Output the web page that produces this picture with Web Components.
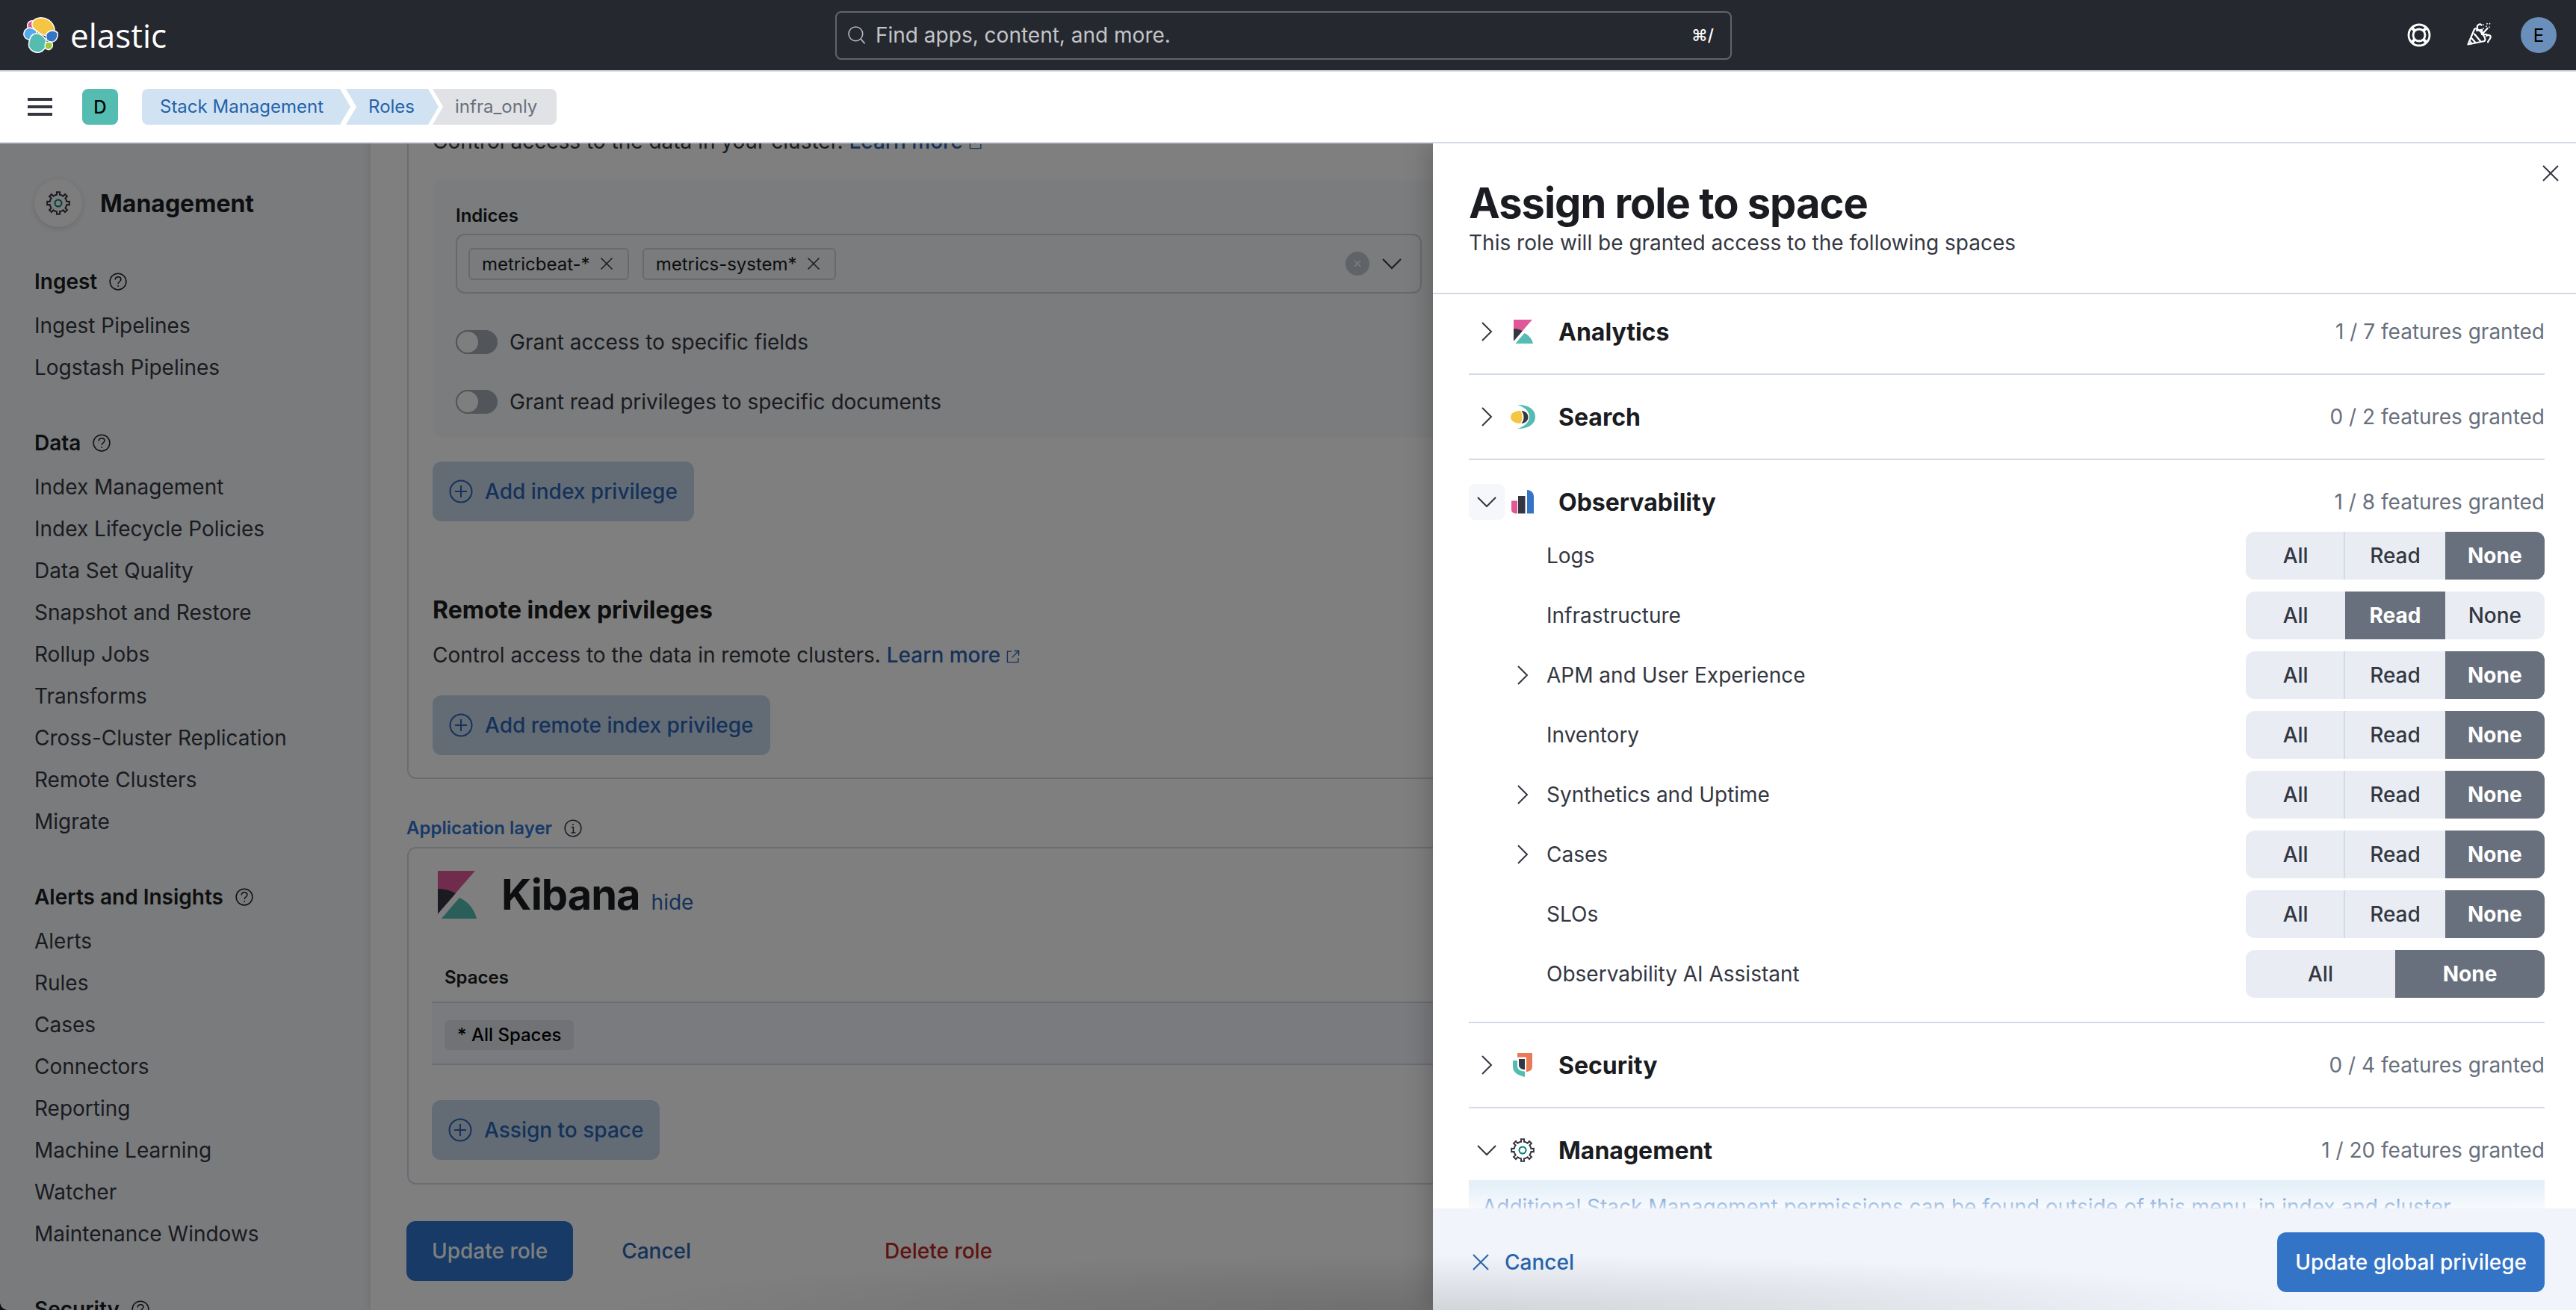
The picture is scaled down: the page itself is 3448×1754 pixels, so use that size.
<!DOCTYPE html>
<html lang="en">
<head>
<meta charset="utf-8">
<title>Roles - Elastic</title>
<style>
  html, body { margin: 0; height: 100%; overflow: hidden; background: #fff; }
  body { font-family: Inter, "Liberation Sans", sans-serif; font-size: 28px; color: #343741; }
</style>
</head>
<body>
<kbn-shell>
  <kbn-header></kbn-header>
  <kbn-subbar></kbn-subbar>
  <kbn-sidenav slot="side"></kbn-sidenav>
  <kbn-role-page slot="main"></kbn-role-page>
  <kbn-flyout slot="flyout"></kbn-flyout>
</kbn-shell>

<script>
// gear outline, 8 teeth
function gearPath() {
  let d = '';
  for (let i = 0; i < 8; i++) {
    const a = i * Math.PI / 4 - Math.PI / 2;
    const pts = [[11.5, -0.3], [11.5, -0.17], [15, -0.14], [15, 0.14], [11.5, 0.17], [11.5, 0.3]];
    pts.forEach(p => {
      const x = 16 + p[0] * Math.cos(a + p[1]);
      const y = 16 + p[0] * Math.sin(a + p[1]);
      d += (d ? 'L' : 'M') + x.toFixed(2) + ' ' + y.toFixed(2);
    });
  }
  return d + 'Z';
}

const line = 'fill="none" stroke="currentColor" stroke-width="2"';
const ICONS = {
  'chevron-right': `<path ${line} d="M10 4l12 12-12 12"/>`,
  'chevron-down': `<path ${line} d="M4 10l12 12 12-12"/>`,
  'close': `<path ${line} d="M6 6l20 20M26 6L6 26"/>`,
  'clear': `<path fill="none" stroke="currentColor" stroke-width="4" d="M7 7l18 18M25 7L7 25"/>`,
  'plus-circle': `<circle ${line} cx="16" cy="16" r="14.5"/><path ${line} d="M16 8v16M8 16h16"/>`,
  'help': `<circle ${line} cx="16" cy="16" r="14.5"/><path ${line} stroke-width="2.4" d="M11 12.5c0-3 2.400-5 5.200-5s5 1.900 5 4.500c0 4-5 4-5 8"/><path ${line} stroke-width="2.600" d="M16.200 22.500v2.600"/>`,
  'info': `<circle ${line} cx="16" cy="16" r="14.500"/><path ${line} stroke-width="2.400" d="M13 14h3.500v10M12.500 24h8M16 8v2.600"/>`,
  'external': `<path ${line} stroke-width="2.500" d="M13 6H5v21h21v-8M18 5h9v9M27 5L14 18"/>`,
  'search': `<circle ${line} cx="14" cy="14" r="11.500"/><path ${line} d="M22 22l7 8"/>`,
  'lifesaver': `<g fill="none" stroke="currentColor" stroke-width="2.800"><circle cx="16" cy="16" r="14"/><circle cx="16" cy="16" r="8"/><path d="M6 6l4.500 4.500M26 6l-4.500 4.500M6 26l4.500-4.500M26 26l-4.500-4.500" stroke-width="4"/></g>`,
  'party': `<g fill="none" stroke="currentColor" stroke-width="2.200" stroke-linejoin="round" stroke-linecap="round"><path d="M1.500 28.500L10 8c2-2 7 1.500 10.500 6s5.500 8 3 10z"/><path d="M6.500 20.500l4.500 5M10 14.500l8 9.500M4.500 25l2 2.200"/><path d="M13 10l6-1M14 6.500C13 2.500 17 0 19.500 2.500"/><path d="M20 15l7.500-8M20 8.500V15h6.500"/><path d="M26 17c3-2.500 6.500-.5 5.500 2.500s-3 3.500-3.500 6"/><path d="M22 2v.5M22 7v.5M27 .5V1M26 4v.5M30.500 .5V1M30 5v.5" stroke-width="1.600"/></g>`,
  'gear': `<path fill="none" stroke="#343741" stroke-width="2" stroke-linejoin="miter" d="${gearPath()}"/><circle cx="16" cy="16" r="4.500" fill="none" stroke="#017d73" stroke-width="2"/>`,
  'kibana': `<path fill="#e0589a" d="M4 0v28.800L28.900 0z"/><path fill="#343741" d="M4 12v16.800l11.900-13.700A24.700 24.700 0 0 0 4 12"/><path fill="#54bcb1" d="M18.500 18L6.400 32H30c-1.300-5.600-5.200-11.200-11.500-14"/>`,
  'search-app': `<path fill="#54bcb1" d="M9 0C24 0 33 6 33 16S24 32 9 32C18 29 25 24 25 16S18 3 9 0z"/><path fill="#343741" d="M14.500 8c1.800 2.500 3 5 3 8.500s-1.200 6-3 8.500c5 0 9-4 9-8.500S19.500 8 14.500 8z"/><path fill="#f5c543" d="M13 8C6 8 0 11 0 16.500S6 25 13 25c1.500-2 2.500-5 2.500-8.500S14.500 10 13 8z"/>`,
  'observability': `<path fill="#dd5a97" d="M1 14.500h8v17H6a5 5 0 0 1-5-5z"/><path fill="#343741" d="M10 8h9.500v23.500H10z"/><path fill="#3474c6" d="M22 0c4 0 9 3 9 9v22.500h-9z"/>`,
  'security': `<path fill="#e87a55" d="M9 0h20v18c0 5-4 7-8 7V5.500H9z"/><path fill="#343741" d="M11 8h8v14c-4 0-8-2-8-6z"/><path fill="#54bcb1" d="M3 10h6v7c0 5 4 7 10 7.500V32c-9-2-16-6-16-14z"/>`
};

class KbnIcon extends HTMLElement {
  connectedCallback() {
    const size = this.getAttribute('size') || 32;
    const name = this.getAttribute('name');
    this.attachShadow({ mode: 'open' });
    this.shadowRoot.innerHTML = `
      <style>
        :host { display: inline-flex; flex: none; width: ${size}px; height: ${size}px; }
        svg { display: block; width: 100%; height: 100%; overflow: visible; }
      </style>
      <svg viewBox="0 0 32 32" aria-hidden="true">${ICONS[name] || ''}</svg>`;
  }
}

class KbnShell extends HTMLElement {
  connectedCallback() {
    this.attachShadow({ mode: 'open' });
    this.shadowRoot.innerHTML = `
      <style>
        :host { display: flex; flex-direction: column; height: 1754px; position: relative; overflow: hidden; }
        .content { flex: 1; min-height: 0; display: flex; overflow: hidden; position: relative; }
        .mask { position: absolute; inset: 0; background: rgba(0, 0, 0, .5); z-index: 10; }
        .flyout { position: absolute; top: 0; right: 0; bottom: 0; width: 1530px; z-index: 20; display: flex; }
        .edge { position: absolute; inset: 0; z-index: 30; pointer-events: none;
          background: radial-gradient(ellipse 1150px 75px at 1950px 100%, rgba(0, 0, 0, .13), transparent); }
        .corner { position: absolute; left: 0; bottom: 0; width: 10px; height: 10px; z-index: 31;
          background: radial-gradient(circle at 100% 0, transparent 9.500px, #111 10px); }
      </style>
      <slot></slot>
      <div class="content">
        <slot name="side"></slot>
        <slot name="main"></slot>
        <div class="mask"></div>
        <div class="flyout"><slot name="flyout"></slot></div>
        <div class="edge"></div>
        <div class="corner"></div>
      </div>`;
  }
}

class KbnHeader extends HTMLElement {
  connectedCallback() {
    this.attachShadow({ mode: 'open' });
    this.shadowRoot.innerHTML = `
      <style>
        :host { display: flex; flex: none; box-sizing: border-box; height: 96px; background: #25282f;
          border-bottom: 2px solid #d3dae6; align-items: center; position: relative; }
        .brand { display: flex; align-items: center; margin-left: 30px; width: 1088px; flex: none; }
        .brand svg { display: block; width: 48px; height: 48px; flex: none; }
        .word { font-family: "Open Sans", sans-serif; font-size: 44px; line-height: 48px; color: #fff; margin-left: 16px; margin-top: -1px; }
        .search { box-sizing: border-box; flex: none; width: 1200px; height: 65px; border: 2px solid #626469; border-radius: 8px;
          display: flex; align-items: center; padding: 0 22px 0 14px; color: #c3c5c8; font-size: 28px; }
        .search kbn-icon { color: #b5b7ba; margin-right: 12px; }
        .search .txt { flex: 1; }
        .keys { color: #fff; font-size: 22px; font-weight: 500; }
        .right { margin-left: auto; display: flex; align-items: center; color: #fff; padding-right: 26px; }
        .right kbn-icon + kbn-icon { margin-left: 48px; }
        .avatar { width: 48px; height: 48px; border-radius: 50%; background: #6a8fbb; color: #000; display: flex;
          align-items: center; justify-content: center; font-size: 24px; margin-left: 40px; }
      </style>
      <div class="brand">
        <svg viewBox="0 0 48 48" aria-hidden="true">
          <g stroke="#fff" stroke-width="1.500">
            <path fill="#dd5a97" d="M8 7c3-3 8-3 10 0l1 9-10 0c-3-2-3-6-1-9z"/>
            <path fill="#f5c543" d="M13 8c1-5 8-8 14-7 9 1 15 8 16 15 0 4-3 7-6 9-4 1-11-1-16-5-5-3-9-7-8-12z"/>
            <path fill="#54a9ea" d="M2 21c1-5 6-8 11-6 3 1 6 3 6 5 0 4-7 10-11 10-4-1-7-5-6-9z"/>
            <path fill="#3474c6" d="M33 21c4-4 11-4 14 0 1 4-1 9-4 11-3 2-7 1-10-1-2-3-2-8 0-10z"/>
            <path fill="#54bcb1" d="M10 29c1-5 6-8 11-7 5 1 10 6 11 11 1 6-3 12-9 14-6 1-12-2-14-7-1-3 0-8 1-11z"/>
            <path fill="#9cc83c" d="M31 34c3-1 7-1 9 1 1 3 0 6-3 8-2 1-5 0-6-1-1-2-1-6 0-8z"/>
          </g>
        </svg>
        <span class="word">elastic</span>
      </div>
      <div class="search">
        <kbn-icon name="search" size="26"></kbn-icon>
        <span class="txt">Find apps, content, and more.</span>
        <span class="keys">⌘/</span>
      </div>
      <div class="right">
        <kbn-icon name="lifesaver"></kbn-icon>
        <kbn-icon name="party"></kbn-icon>
        <div class="avatar">E</div>
      </div>`;
  }
}

class KbnSubbar extends HTMLElement {
  connectedCallback() {
    this.attachShadow({ mode: 'open' });
    this.shadowRoot.innerHTML = `
      <style>
        :host { display: flex; flex: none; box-sizing: border-box; height: 96px; background: #fff;
          border-bottom: 2px solid #d3dae6; align-items: center; position: relative; z-index: 40; }
        .menu { width: 33px; height: 24px; margin-left: 37px; flex: none;
          background: linear-gradient(#343741 0 4px, transparent 4px 10px, #343741 10px 14px, transparent 14px 20px, #343741 20px 24px); }
        .space { width: 48px; height: 48px; border-radius: 8px; background: #54bcb1; color: #000; margin-left: 40px; flex: none;
          display: flex; align-items: center; justify-content: center; font-size: 24px; font-weight: 500; }
        .crumbs { display: flex; margin-left: 32px; height: 48px; font-size: 24px; line-height: 48px; }
        .crumb { background: #d1e3f3; color: #2562a8; padding: 0 32px 0 30px; margin-left: -6px; flex: none;
          clip-path: polygon(0 0, calc(100% - 14px) 0, 100% 50%, calc(100% - 14px) 100%, 0 100%, 14px 50%); }
        .crumb.first { margin-left: 0; padding: 0 36px 0 24px; border-radius: 8px 0 0 8px;
          clip-path: polygon(0 0, calc(100% - 14px) 0, 100% 50%, calc(100% - 14px) 100%, 0 100%); }
        .crumb.last { background: #e1e2e5; color: #69707d; padding-right: 26px; border-radius: 0 8px 8px 0; margin-left: -8px;
          clip-path: polygon(0 0, 100% 0, 100% 100%, 0 100%, 14px 50%); }
      </style>
      <div class="menu"></div>
      <div class="space">D</div>
      <nav class="crumbs">
        <span class="crumb first">Stack Management</span>
        <span class="crumb">Roles</span>
        <span class="crumb last">infra_only</span>
      </nav>`;
  }
}

class SideGroup extends HTMLElement {
  connectedCallback() {
    const items = (this.getAttribute('items') || '').split('|');
    this.attachShadow({ mode: 'open' });
    this.shadowRoot.innerHTML = `
      <style>
        :host { display: block; margin-bottom: 42px; }
        h3 { margin: 0; height: 62px; display: flex; align-items: center; gap: 16px; font-size: 28px; font-weight: 600; color: #1a1c21; }
        div { height: 56px; line-height: 56px; font-size: 28px; color: #343741; white-space: nowrap; }
      </style>
      <h3>${this.getAttribute('title')} <kbn-icon name="help" size="24"></kbn-icon></h3>
      ${items.map(i => `<div>${i}</div>`).join('')}`;
  }
}

class KbnSidenav extends HTMLElement {
  connectedCallback() {
    this.attachShadow({ mode: 'open' });
    this.shadowRoot.innerHTML = `
      <style>
        :host { display: block; flex: none; box-sizing: border-box; width: 496px; background: #f5f7fa; padding: 48px 0 0 46px;
          position: relative; overflow: hidden; box-shadow: inset -14px 0 14px -14px rgba(0, 0, 0, .12); }
        .glare { position: absolute; left: 0; top: 0; width: 360px; height: 70px; }
        .title { display: flex; align-items: center; height: 64px; margin-bottom: 42px; position: relative;
          font-size: 32px; font-weight: 700; color: #1a1c21; }
        .badge { width: 64px; height: 64px; border-radius: 50%; background: #fafbfd; display: flex; align-items: center; justify-content: center;
          margin-right: 24px; box-shadow: 0 2px 8px rgba(0, 0, 0, .14); }
      </style>
      <svg class="glare" viewBox="0 0 360 70" aria-hidden="true"><path fill="#fff" fill-opacity=".09" d="M0 32l126-11L352 0H250L126 21 0 66z"/></svg>
      <div class="title"><span class="badge"><kbn-icon name="gear"></kbn-icon></span>Management</div>
      <side-group title="Ingest" items="Ingest Pipelines|Logstash Pipelines"></side-group>
      <side-group title="Data" items="Index Management|Index Lifecycle Policies|Data Set Quality|Snapshot and Restore|Rollup Jobs|Transforms|Cross-Cluster Replication|Remote Clusters|Migrate"></side-group>
      <side-group title="Alerts and Insights" items="Alerts|Rules|Cases|Connectors|Reporting|Machine Learning|Watcher|Maintenance Windows"></side-group>
      <side-group title="Security" items="Users"></side-group>`;
  }
}

class KbnButton extends HTMLElement {
  connectedCallback() {
    this.attachShadow({ mode: 'open' });
    const icon = this.getAttribute('icon');
    this.shadowRoot.innerHTML = `
      <style>
        :host { display: inline-flex; box-sizing: border-box; height: 80px; align-items: center; gap: 16px; border-radius: 12px;
          padding: 0 22px; font-size: 28px; font-weight: 500; white-space: nowrap; background: #c6d8ea; color: #2a64b4; flex: none; }
        :host([variant="fill"]) { background: #2e74ce; color: #fff; padding: 0 34px; }
        :host([variant="primary"]) { background: #3474c6; color: #fff; padding: 0 24px; }
        :host([variant="empty"]) { background: none; padding: 0; }
        :host([variant="danger"]) { background: none; padding: 0; color: #bd271e; }
      </style>
      ${icon ? `<kbn-icon name="${icon}"></kbn-icon>` : ''}<slot></slot>`;
  }
}

class KbnPill extends HTMLElement {
  connectedCallback() {
    this.attachShadow({ mode: 'open' });
    this.shadowRoot.innerHTML = `
      <style>
        :host { display: inline-flex; box-sizing: border-box; height: 43px; align-items: center; gap: 10px; padding: 0 16px 0 16px;
          border: 2px solid #cdd3de; border-radius: 6px; background: #f5f7fa; color: #1a1c21; font-size: 24px; }
        kbn-icon { color: #343741; }
      </style>
      <slot></slot><kbn-icon name="close" size="24"></kbn-icon>`;
  }
}

class KbnSwitch extends HTMLElement {
  connectedCallback() {
    this.attachShadow({ mode: 'open' });
    this.shadowRoot.innerHTML = `
      <style>
        :host { display: flex; height: 32px; align-items: center; gap: 16px; font-size: 28px; color: #343741; }
        .track { width: 56px; height: 32px; border-radius: 16px; background: #a5aab2; position: relative; flex: none; }
        .knob { position: absolute; left: 0; top: 0; box-sizing: border-box; width: 32px; height: 32px; border-radius: 50%;
          background: #fbfcfd; border: 2px solid #a5aab2; }
      </style>
      <span class="track"><span class="knob"></span></span><slot></slot>`;
  }
}

class KbnRolePage extends HTMLElement {
  connectedCallback() {
    this.attachShadow({ mode: 'open' });
    this.shadowRoot.innerHTML = `
      <style>
        :host { display: block; flex: 1; min-width: 0; padding-left: 49px; background: #fff; font-size: 28px; color: #343741; overflow: hidden; }
        a { color: #2a64b4; text-decoration: none; font-weight: 500; }
        a kbn-icon { vertical-align: -3px; margin-left: 6px; }
        p { margin: 0; line-height: 40px; height: 40px; white-space: nowrap; }
        .panel { box-sizing: border-box; border: 2px solid #d3dae6; border-radius: 12px; padding-left: 32px; width: 2000px; }
        .top { margin-top: -60px; padding-top: 35px; padding-bottom: 30px; }
        .inner { margin-top: 33px; background: #f7f8fb; border-radius: 12px; padding: 31px 0 32px 31px; }
        label { display: block; font-size: 24px; font-weight: 600; line-height: 32px; color: #1a1c21; }
        .combo { box-sizing: border-box; margin-top: 8px; height: 80px; width: 1293px; border: 2px solid #cdd3de; border-radius: 12px;
          display: flex; align-items: center; padding: 0 22px 0 15px; gap: 18px; }
        .combo .clear { margin-left: auto; width: 32px; height: 32px; border-radius: 50%; background: #c0c6d0; color: #f5f7fa;
          display: flex; align-items: center; justify-content: center; }
        .combo .clear + kbn-icon { margin-left: -4px; }
        .switches { margin-top: 49px; display: flex; flex-direction: column; gap: 48px; }
        .add { margin-top: 32px; display: flex; width: max-content; }
        h3 { margin: 99px 0 0; font-size: 32px; line-height: 40px; font-weight: 700; color: #1a1c21; }
        .remote-text { margin-top: 20px; }
        .remote-btn { margin-top: 34px; display: flex; width: max-content; }
        .app-label { margin: 50px 0 9px -1px; display: flex; align-items: center; gap: 16px; font-size: 24px; line-height: 32px; font-weight: 600; color: #2e74ce; }
        .app-label kbn-icon { color: #343741; }
        .app { padding-top: 30px; padding-bottom: 31px; padding-left: 31px; }
        .kib { display: flex; align-items: baseline; height: 64px; }
        .kib kbn-icon { align-self: flex-start; }
        .kib strong { font-size: 56px; line-height: 64px; font-weight: 700; letter-spacing: -1px; color: #1a1c21; margin-left: 29px; }
        .kib a { margin-left: 15px; font-weight: 400; }
        .th { margin-top: 63px; height: 48px; padding-left: 17px; font-size: 24px; line-height: 32px; font-weight: 600; color: #1a1c21; box-sizing: border-box; }
        .tr { box-sizing: border-box; height: 85px; border-top: 2px solid #d3dae6; border-bottom: 2px solid #d3dae6; background: #f2f6fc; padding: 23px 0 0 17px; }
        .tag { display: inline-block; height: 40px; line-height: 40px; padding: 0 17px; border-radius: 6px; background: #e0e4ea; font-size: 24px; font-weight: 500; color: #000; }
        .assign { margin-top: 47px; display: flex; width: max-content; }
        .actions { margin-top: 49px; margin-left: -1px; display: flex; align-items: center; }
        .actions .cancel { margin-left: 65px; }
        .actions .del { margin-left: 259px; }
      </style>
      <div class="panel top">
        <p>Control access to the data in your cluster. <a href="#">Learn more<kbn-icon name="external" size="22"></kbn-icon></a></p>
        <div class="inner">
          <label>Indices</label>
          <div class="combo">
            <kbn-pill>metricbeat-*</kbn-pill><kbn-pill>metrics-system*</kbn-pill>
            <span class="clear"><kbn-icon name="clear" size="14"></kbn-icon></span>
            <kbn-icon name="chevron-down"></kbn-icon>
          </div>
          <div class="switches">
            <kbn-switch>Grant access to specific fields</kbn-switch>
            <kbn-switch>Grant read privileges to specific documents</kbn-switch>
          </div>
        </div>
        <kbn-button class="add" icon="plus-circle">Add index privilege</kbn-button>
        <h3>Remote index privileges</h3>
        <p class="remote-text">Control access to the data in remote clusters. <a href="#">Learn more<kbn-icon name="external" size="22"></kbn-icon></a></p>
        <kbn-button class="remote-btn" icon="plus-circle">Add remote index privilege</kbn-button>
      </div>
      <div class="app-label">Application layer <kbn-icon name="info" size="24"></kbn-icon></div>
      <div class="panel app">
        <div class="kib"><kbn-icon name="kibana" size="64"></kbn-icon><strong>Kibana</strong><a href="#">hide</a></div>
        <div class="th">Spaces</div>
        <div class="tr"><span class="tag">* All Spaces</span></div>
        <kbn-button class="assign" icon="plus-circle">Assign to space</kbn-button>
      </div>
      <div class="actions">
        <kbn-button variant="fill">Update role</kbn-button>
        <kbn-button class="cancel" variant="empty">Cancel</kbn-button>
        <kbn-button class="del" variant="danger">Delete role</kbn-button>
      </div>`;
  }
}

class FeatureSection extends HTMLElement {
  connectedCallback() {
    const open = this.hasAttribute('open');
    this.attachShadow({ mode: 'open' });
    this.shadowRoot.innerHTML = `
      <style>
        :host { display: block; box-sizing: border-box; padding: 32px 0; border-bottom: 2px solid #d3dae6; }
        :host(:last-of-type) { border-bottom: 0; padding-bottom: 16px; }
        .head { display: flex; align-items: center; height: 48px; }
        .toggle { width: 48px; height: 48px; border-radius: 8px; display: flex; align-items: center; justify-content: center; color: #343741; margin-right: 8px; }
        :host([focus]) .toggle { background: #f5f7fa; }
        .name { font-size: 32px; font-weight: 700; color: #1a1c21; margin-left: 32px; flex: 1; }
        .count { font-size: 28px; color: #69707d; }
        ::slotted(*) { margin-top: 16px; }
      </style>
      <div class="head">
        <span class="toggle"><kbn-icon name="${open ? 'chevron-down' : 'chevron-right'}"></kbn-icon></span>
        <kbn-icon name="${this.getAttribute('icon')}"></kbn-icon>
        <span class="name">${this.getAttribute('name')}</span>
        <span class="count">${this.getAttribute('count')}</span>
      </div>
      <slot></slot>`;
  }
}

class FeatureRow extends HTMLElement {
  connectedCallback() {
    const options = (this.getAttribute('options') || 'All|Read|None').split('|');
    const value = this.getAttribute('value') || 'None';
    const more = this.hasAttribute('expandable');
    this.attachShadow({ mode: 'open' });
    this.shadowRoot.innerHTML = `
      <style>
        :host { display: flex; align-items: center; height: 64px; padding-left: 60px; font-size: 28px; color: #343741; }
        .chev { width: 24px; height: 24px; margin-right: 20px; display: flex; align-items: center; justify-content: center; flex: none; }
        .label { flex: 1; }
        .group { display: flex; width: 400px; height: 64px; border-radius: 12px; overflow: hidden; background: #e9edf3; flex: none; }
        .opt { flex: 1 1 0; display: flex; align-items: center; justify-content: center; font-weight: 500; color: #343741; }
        .opt.on { background: #69707d; color: #fff; font-weight: 700; }
        .opt.sep { box-shadow: inset -2px 0 0 #d3dae6; }
      </style>
      <span class="chev">${more ? '<kbn-icon name="chevron-right"></kbn-icon>' : ''}</span>
      <span class="label"><slot></slot></span>
      <div class="group">
        ${options.map((o, i) => {
          const on = o === value;
          const sep = !on && i === 0 && options.length === 3 && options[1] !== value;
          return `<span class="opt${on ? ' on' : ''}${sep ? ' sep' : ''}">${o}</span>`;
        }).join('')}
      </div>`;
  }
}

class KbnFlyout extends HTMLElement {
  connectedCallback() {
    this.attachShadow({ mode: 'open' });
    this.shadowRoot.innerHTML = `
      <style>
        :host { display: flex; flex-direction: column; width: 100%; background: #fff; position: relative; box-shadow: -8px 0 30px rgba(0, 0, 0, .18); }
        .close { position: absolute; top: 24px; right: 18px; color: #343741; z-index: 2; }
        header { flex: none; box-sizing: border-box; height: 202px; padding: 48px 48px 0; border-bottom: 2px solid #d3dae6; position: relative; background: #fff; z-index: 1; }
        h2 { margin: 0; font-size: 56px; line-height: 64px; font-weight: 700; letter-spacing: -1px; color: #1a1c21; }
        header p { margin: 1px 0 0; font-size: 28px; line-height: 40px; color: #343741; }
        .body { flex: 1; min-height: 0; overflow: hidden; position: relative; padding: 0 42px 0 48px; }
        .list { margin-top: -6px; }
        .body::after { content: ""; position: absolute; left: 0; right: 0; bottom: 0; height: 30px;
          background: linear-gradient(rgba(255, 255, 255, 0), rgba(255, 255, 255, .7)); }
        .callout { background: #e6f0f9; color: #3474c6; padding: 16px 18px; font-size: 28px; line-height: 40px; }
        footer { flex: none; box-sizing: border-box; height: 136px; background: #f1f4fa; display: flex; align-items: center;
          justify-content: space-between; padding: 8px 42px 0 48px; }
        .cancel { display: flex; align-items: center; gap: 16px; color: #2765ad; font-size: 28px; font-weight: 500; }
      </style>
      <kbn-icon class="close" name="close"></kbn-icon>
      <header>
        <h2>Assign role to space</h2>
        <p>This role will be granted access to the following spaces</p>
      </header>
      <div class="body">
        <div class="list">
          <feature-section icon="kibana" name="Analytics" count="1 / 7 features granted"></feature-section>
          <feature-section icon="search-app" name="Search" count="0 / 2 features granted"></feature-section>
          <feature-section icon="observability" name="Observability" count="1 / 8 features granted" open focus>
            <feature-row>Logs</feature-row>
            <feature-row value="Read">Infrastructure</feature-row>
            <feature-row expandable>APM and User Experience</feature-row>
            <feature-row>Inventory</feature-row>
            <feature-row expandable>Synthetics and Uptime</feature-row>
            <feature-row expandable>Cases</feature-row>
            <feature-row>SLOs</feature-row>
            <feature-row options="All|None">Observability AI Assistant</feature-row>
          </feature-section>
          <feature-section icon="security" name="Security" count="0 / 4 features granted"></feature-section>
          <feature-section icon="gear" name="Management" count="1 / 20 features granted" open>
            <div class="callout">Additional Stack Management permissions can be found outside of this menu, in index and cluster privileges.</div>
          </feature-section>
        </div>
      </div>
      <footer>
        <div class="cancel"><kbn-icon name="close"></kbn-icon>Cancel</div>
        <kbn-button variant="primary">Update global privilege</kbn-button>
      </footer>`;
  }
}

customElements.define('kbn-icon', KbnIcon);
customElements.define('kbn-shell', KbnShell);
customElements.define('kbn-header', KbnHeader);
customElements.define('kbn-subbar', KbnSubbar);
customElements.define('side-group', SideGroup);
customElements.define('kbn-sidenav', KbnSidenav);
customElements.define('kbn-button', KbnButton);
customElements.define('kbn-pill', KbnPill);
customElements.define('kbn-switch', KbnSwitch);
customElements.define('kbn-role-page', KbnRolePage);
customElements.define('feature-section', FeatureSection);
customElements.define('feature-row', FeatureRow);
customElements.define('kbn-flyout', KbnFlyout);
</script>
</body>
</html>
